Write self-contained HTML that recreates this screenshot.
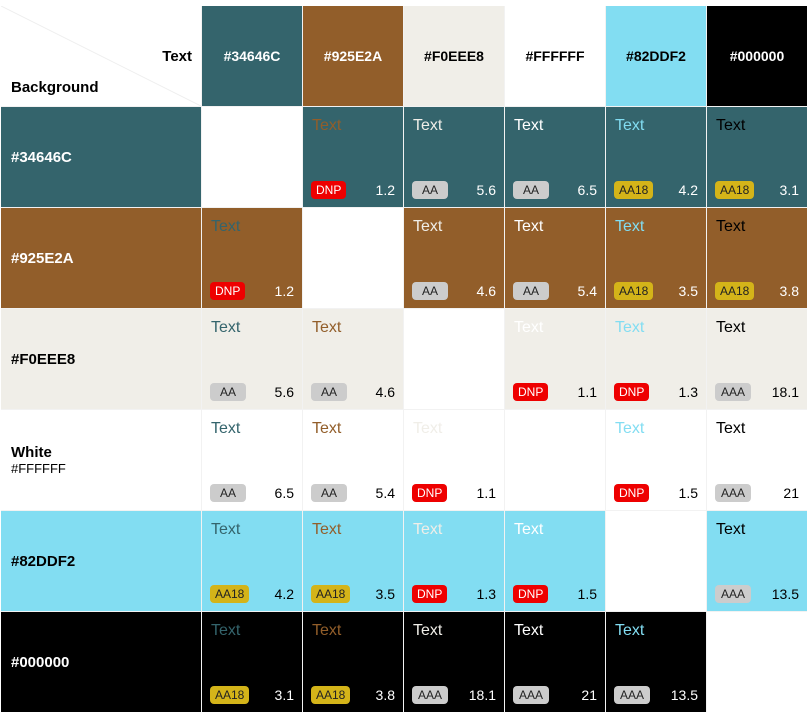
<!DOCTYPE html><html><head><style>
body{margin:0;background:#fff;font-family:"Liberation Sans",sans-serif;}
.g{position:absolute;left:1px;top:6px;display:grid;grid-template-columns:200px repeat(6,100px);grid-template-rows:repeat(7,100px);gap:1px;background:#f2f2f2;border:0;}
.g>div{position:relative;background:#fff;}
.h{display:flex;align-items:center;justify-content:center;font-weight:bold;font-size:14px;}
.l{display:flex;flex-direction:column;justify-content:center;padding-left:10px;font-weight:bold;font-size:15px;}
.t{position:absolute;left:9px;top:10px;font-size:16px;}
.b{position:absolute;left:8px;top:74px;height:18px;line-height:18px;padding:0 5px;border-radius:4px;font-size:12px;}
.n{position:absolute;right:8px;top:75px;font-size:14px;}
.D{background:#e00;color:#fff}.A{background:#ccc;color:#222;min-width:26px;text-align:center}.Y{background:#d4b419;color:#222}
.c1{background:#34646C!important}.c2{background:#925E2A!important}.c3{background:#F0EEE8!important}.c5{background:#82DDF2!important}.c6{background:#000!important}
.w{color:#fff}.k{color:#000}
</style></head><body><div class="g">
<div><svg width="200" height="100" style="position:absolute;left:0;top:0"><line x1="0" y1="0" x2="200" y2="100" stroke="#eee"/></svg><span style="position:absolute;right:9px;top:42px;font-weight:bold;font-size:15px">Text</span><span style="position:absolute;left:10px;top:73px;font-weight:bold;font-size:15px">Background</span></div>
<div class="h c1 w">#34646C</div><div class="h c2 w">#925E2A</div><div class="h c3 k">#F0EEE8</div><div class="h k">#FFFFFF</div><div class="h c5 k">#82DDF2</div><div class="h c6 w">#000000</div>

<div class="l c1 w">#34646C</div><div></div>
<div class="c1"><span class="t" style="color:#925E2A">Text</span><span class="b D">DNP</span><span class="n w">1.2</span></div>
<div class="c1"><span class="t" style="color:#F0EEE8">Text</span><span class="b A">AA</span><span class="n w">5.6</span></div>
<div class="c1"><span class="t" style="color:#fff">Text</span><span class="b A">AA</span><span class="n w">6.5</span></div>
<div class="c1"><span class="t" style="color:#82DDF2">Text</span><span class="b Y">AA18</span><span class="n w">4.2</span></div>
<div class="c1"><span class="t" style="color:#000">Text</span><span class="b Y">AA18</span><span class="n w">3.1</span></div>

<div class="l c2 w">#925E2A</div>
<div class="c2"><span class="t" style="color:#34646C">Text</span><span class="b D">DNP</span><span class="n w">1.2</span></div><div></div>
<div class="c2"><span class="t" style="color:#F0EEE8">Text</span><span class="b A">AA</span><span class="n w">4.6</span></div>
<div class="c2"><span class="t" style="color:#fff">Text</span><span class="b A">AA</span><span class="n w">5.4</span></div>
<div class="c2"><span class="t" style="color:#82DDF2">Text</span><span class="b Y">AA18</span><span class="n w">3.5</span></div>
<div class="c2"><span class="t" style="color:#000">Text</span><span class="b Y">AA18</span><span class="n w">3.8</span></div>

<div class="l c3 k">#F0EEE8</div>
<div class="c3"><span class="t" style="color:#34646C">Text</span><span class="b A">AA</span><span class="n k">5.6</span></div>
<div class="c3"><span class="t" style="color:#925E2A">Text</span><span class="b A">AA</span><span class="n k">4.6</span></div><div></div>
<div class="c3"><span class="t" style="color:#fff">Text</span><span class="b D">DNP</span><span class="n k">1.1</span></div>
<div class="c3"><span class="t" style="color:#82DDF2">Text</span><span class="b D">DNP</span><span class="n k">1.3</span></div>
<div class="c3"><span class="t" style="color:#000">Text</span><span class="b A">AAA</span><span class="n k">18.1</span></div>

<div class="l k">White<span style="font-weight:normal;font-size:13px">#FFFFFF</span></div>
<div><span class="t" style="color:#34646C">Text</span><span class="b A">AA</span><span class="n k">6.5</span></div>
<div><span class="t" style="color:#925E2A">Text</span><span class="b A">AA</span><span class="n k">5.4</span></div>
<div><span class="t" style="color:#F0EEE8">Text</span><span class="b D">DNP</span><span class="n k">1.1</span></div><div></div>
<div><span class="t" style="color:#82DDF2">Text</span><span class="b D">DNP</span><span class="n k">1.5</span></div>
<div><span class="t" style="color:#000">Text</span><span class="b A">AAA</span><span class="n k">21</span></div>

<div class="l c5 k">#82DDF2</div>
<div class="c5"><span class="t" style="color:#34646C">Text</span><span class="b Y">AA18</span><span class="n k">4.2</span></div>
<div class="c5"><span class="t" style="color:#925E2A">Text</span><span class="b Y">AA18</span><span class="n k">3.5</span></div>
<div class="c5"><span class="t" style="color:#F0EEE8">Text</span><span class="b D">DNP</span><span class="n k">1.3</span></div>
<div class="c5"><span class="t" style="color:#fff">Text</span><span class="b D">DNP</span><span class="n k">1.5</span></div><div></div>
<div class="c5"><span class="t" style="color:#000">Text</span><span class="b A">AAA</span><span class="n k">13.5</span></div>

<div class="l c6 w">#000000</div>
<div class="c6"><span class="t" style="color:#34646C">Text</span><span class="b Y">AA18</span><span class="n w">3.1</span></div>
<div class="c6"><span class="t" style="color:#925E2A">Text</span><span class="b Y">AA18</span><span class="n w">3.8</span></div>
<div class="c6"><span class="t" style="color:#F0EEE8">Text</span><span class="b A">AAA</span><span class="n w">18.1</span></div>
<div class="c6"><span class="t" style="color:#fff">Text</span><span class="b A">AAA</span><span class="n w">21</span></div>
<div class="c6"><span class="t" style="color:#82DDF2">Text</span><span class="b A">AAA</span><span class="n w">13.5</span></div><div></div>
</div></body></html>
